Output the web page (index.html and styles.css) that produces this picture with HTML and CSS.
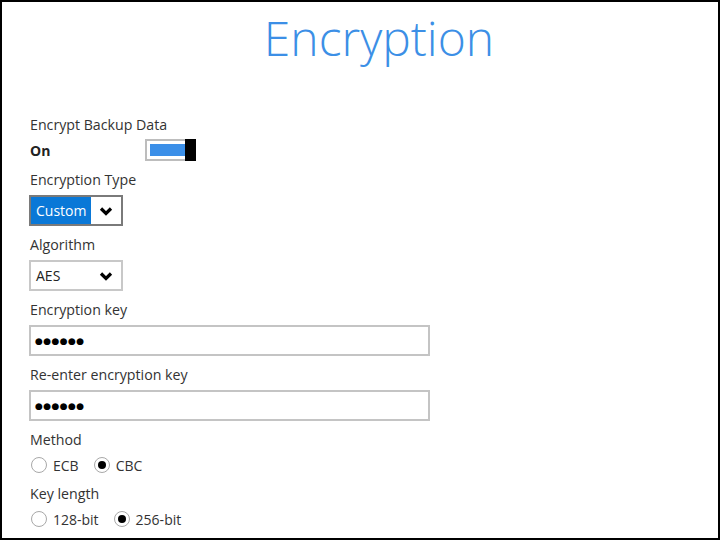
FILE: index.html
```html
<!DOCTYPE html>
<html>
<head>
<meta charset="utf-8">
<link rel="stylesheet" href="styles.css">
</head>
<body>
<div class="page">
  <h1 class="title">Encryption</h1>
  <div class="form">
    <div class="group group-first">
      <div class="label">Encrypt Backup Data</div>
      <div class="onrow">
        <span class="on">On</span>
        <div class="toggle"><div class="track"><div class="bar"></div></div><div class="knob"></div></div>
      </div>
    </div>
    <div class="group">
      <div class="label">Encryption Type</div>
      <div class="select select-dark">
        <span class="sel-value sel-blue">Custom</span>
        <span class="chev"><svg width="14" height="10" viewBox="0 0 14 10"><path d="M2 2.5 L7 7.5 L12 2.5" fill="none" stroke="#000" stroke-width="3.2"/></svg></span>
      </div>
    </div>
    <div class="group">
      <div class="label">Algorithm</div>
      <div class="select">
        <span class="sel-value">AES</span>
        <span class="chev"><svg width="14" height="10" viewBox="0 0 14 10"><path d="M2 2.5 L7 7.5 L12 2.5" fill="none" stroke="#000" stroke-width="3.2"/></svg></span>
      </div>
    </div>
    <div class="group">
      <div class="label">Encryption key</div>
      <div class="input"><span class="dots">●●●●●●</span></div>
    </div>
    <div class="group">
      <div class="label">Re-enter encryption key</div>
      <div class="input"><span class="dots">●●●●●●</span></div>
    </div>
    <div class="group">
      <div class="label">Method</div>
      <div class="radios">
        <label class="radio"><span class="circle"></span>ECB</label>
        <label class="radio"><span class="circle checked"></span>CBC</label>
      </div>
    </div>
    <div class="group group-last">
      <div class="label">Key length</div>
      <div class="radios">
        <label class="radio"><span class="circle"></span>128-bit</label>
        <label class="radio"><span class="circle checked"></span>256-bit</label>
      </div>
    </div>
  </div>
</div>
</body>
</html>
```

FILE: styles.css
```css
html, body {
  margin: 0;
  padding: 0;
  background: #fff;
}
.page {
  width: 720px;
  height: 540px;
  box-sizing: border-box;
  border: 2px solid #000;
  font-family: "Open Sans", "Noto Sans", sans-serif;
  color: #333;
  font-size: 14px;
  overflow: hidden;
}
.title {
  margin: 6px 0 0 0;
  height: 60px;
  line-height: 60px;
  font-weight: 300;
  font-size: 48px;
  color: #3c8fe6;
  text-align: center;
  padding-left: 38px;
}
.form {
  display: flex;
  flex-direction: column;
  gap: 9px;
  padding: 47px 0 0 27px;
}
.group {
  display: flex;
  flex-direction: column;
  align-items: flex-start;
  gap: 5px;
}
.group-first {
  gap: 4px;
}
.label {
  line-height: 20px;
  height: 20px;
  padding-left: 1px;
  font-size: 14.2px;
}
.onrow {
  display: flex;
  align-items: center;
  height: 22px;
}
.on {
  font-weight: 700;
  color: #222;
  width: 115px;
  padding-left: 1px;
}
.toggle {
  display: flex;
  height: 22px;
}
.track {
  width: 40px;
  height: 22px;
  box-sizing: border-box;
  border: 2px solid #bdbdbd;
  border-right: none;
  padding: 3px 0 3px 3px;
}
.bar {
  height: 100%;
  background: #3b8fe8;
}
.knob {
  width: 11px;
  height: 22px;
  background: #000;
}
.select {
  display: flex;
  width: 94px;
  height: 31px;
  box-sizing: border-box;
  border: 2px solid #c8c8c8;
  background: #fff;
}
.select-dark {
  border-color: #7a7a7a;
}
.sel-value {
  width: 60px;
  line-height: 27px;
  padding-left: 5px;
  box-sizing: border-box;
  color: #222;
}
.sel-blue {
  background: #0a78d7;
  color: #fff;
}
.chev {
  flex: 1;
  display: flex;
  align-items: center;
  justify-content: center;
  padding-top: 1px;
}
.input {
  width: 401px;
  height: 31px;
  box-sizing: border-box;
  border: 2px solid #c4c4c4;
  display: flex;
  align-items: center;
  padding-left: 4px;
}
.dots {
  font-family: "DejaVu Sans", sans-serif;
  font-size: 9px;
  letter-spacing: 0.4px;
  color: #000;
}
.radios {
  display: flex;
  height: 20px;
  align-items: center;
  gap: 15px;
  padding-left: 2px;
}
.radio {
  display: flex;
  align-items: center;
  gap: 6px;
  color: #333;
}
.circle {
  width: 16px;
  height: 16px;
  box-sizing: border-box;
  border: 1px solid #a8a8a8;
  border-radius: 50%;
  display: flex;
  align-items: center;
  justify-content: center;
}
.circle.checked::after {
  content: "";
  width: 8px;
  height: 8px;
  border-radius: 50%;
  background: #000;
}
```
